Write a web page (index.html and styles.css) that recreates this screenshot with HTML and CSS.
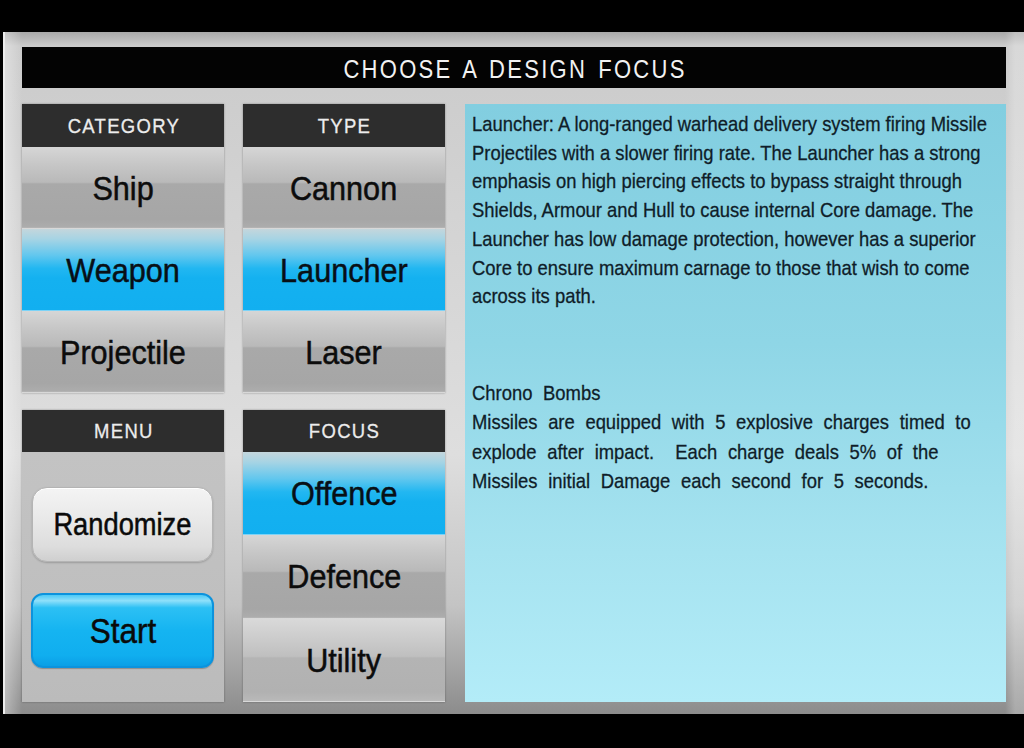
FILE: index.html
```html
<!DOCTYPE html>
<html lang="en">
<head>
<meta charset="utf-8">
<title>Choose a Design Focus</title>
<link rel="stylesheet" href="styles.css">
</head>
<body>
<div class="screen">
  <div class="frame">
    <div class="title"><span class="sq title-text">CHOOSE A DESIGN FOCUS</span></div>
    <div class="grid">
      <section class="panel cat">
        <div class="hdr"><span class="sq">CATEGORY</span></div>
        <div class="opt"><span class="sq">Ship</span></div>
        <div class="opt sel"><span class="sq">Weapon</span></div>
        <div class="opt"><span class="sq">Projectile</span></div>
      </section>
      <section class="panel type">
        <div class="hdr"><span class="sq">TYPE</span></div>
        <div class="opt"><span class="sq">Cannon</span></div>
        <div class="opt sel"><span class="sq">Launcher</span></div>
        <div class="opt"><span class="sq">Laser</span></div>
      </section>
      <section class="desc">
        <p class="desc-text">Launcher: A long-ranged warhead delivery system firing Missile<br>Projectiles with a slower firing rate. The Launcher has a strong<br>emphasis on high piercing effects to bypass straight through<br>Shields, Armour and Hull to cause internal Core damage. The<br>Launcher has low damage protection, however has a superior<br>Core to ensure maximum carnage to those that wish to come<br>across its path.</p>
        <p class="desc-text effect">Chrono Bombs<br>Missiles are equipped with 5 explosive charges timed to<br>explode after impact.&nbsp; Each charge deals 5% of the<br>Missiles initial Damage each second for 5 seconds.</p>
      </section>
      <section class="panel menu">
        <div class="hdr hdr-b"><span class="sq">MENU</span></div>
        <div class="menu-body">
          <button class="btn rand"><span class="sq">Randomize</span></button>
          <button class="btn start"><span class="sq">Start</span></button>
        </div>
      </section>
      <section class="panel focus">
        <div class="hdr hdr-b"><span class="sq">FOCUS</span></div>
        <div class="opt sel"><span class="sq">Offence</span></div>
        <div class="opt"><span class="sq">Defence</span></div>
        <div class="opt light"><span class="sq">Utility</span></div>
      </section>
    </div>
  </div>
</div>
</body>
</html>
```
FILE: styles.css
```css
* { box-sizing: border-box; }
html, body {
  margin: 0;
  padding: 0;
  background: #000;
}
body {
  font-family: "Liberation Sans", Arial, sans-serif;
  width: 1024px;
  height: 748px;
  overflow: hidden;
}
.screen {
  height: 748px;
  padding: 32px 0 34px 0;
}
.frame {
  margin-left: 3px;
  height: 682px;
  padding: 15px 18px 12px 17px;
  border-left: 2px solid #ececec;
  background:
    linear-gradient(90deg, rgba(255,255,255,0.35) 0px, rgba(255,255,255,0) 17px, rgba(255,255,255,0) 1000px, rgba(255,255,255,0.25) 1010px),
    linear-gradient(180deg, #a9a9a9 0px, #cbcbcb 14px, #d4d4d4 30%, #dedede 62%, #c4c4c4 84%, #8c8c8c 100%);
  display: flex;
  flex-direction: column;
}
.sq {
  display: inline-block;
  transform: scaleX(0.88);
  white-space: nowrap;
}
.title {
  height: 41px;
  margin-bottom: 16px;
  background: #030303;
  color: #f2f2f2;
  display: flex;
  align-items: center;
  justify-content: center;
  padding-top: 3px;
  font-size: 25px;
}
.title-text {
  letter-spacing: 2.6px;
  word-spacing: 3px;
  margin-left: 2px;
}
.grid {
  display: grid;
  grid-template-columns: 202px 202px 542px;
  grid-template-rows: 289px 292px;
  column-gap: 19px;
  row-gap: 17px;
}
.panel {
  display: flex;
  flex-direction: column;
  box-shadow: 0 0 2px rgba(0,0,0,0.35);
}
.hdr {
  height: 43px;
  flex: 0 0 auto;
  background: #2d2d2d;
  color: #ececec;
  font-size: 21px;
  letter-spacing: 1.5px;
  display: flex;
  align-items: center;
  justify-content: center;
  padding-left: 1px;
  -webkit-text-stroke: 0.3px #ececec;
}
.hdr-b { height: 42px; }
.opt {
  flex: 1 1 0;
  display: flex;
  align-items: center;
  justify-content: center;
  font-size: 34px;
  color: #0c0c0c;
  -webkit-text-stroke: 0.5px #0c0c0c;
  background: linear-gradient(180deg, #d6d6d6 0%, #c6c6c6 22%, #b9b9b9 43%, #a9a9a9 45%, #a6a6a6 88%, #acacac 97%, #bdbdbd 100%);
  box-shadow: inset 0 -1px 0 rgba(255,255,255,0.45);
}
.opt .sq { transform: scaleX(0.9); }
.opt.light {
  background: linear-gradient(180deg, #d9d9d9 0%, #cbcbcb 25%, #bfbfbf 45%, #b4b4b4 47%, #b1b1b1 88%, #bababa 100%);
}
.opt.sel {
  background: linear-gradient(180deg, #c4d6dc 0%, #a7d4e4 12%, #62c7ee 32%, #22b7f1 48%, #14b1f0 60%, #12aff0 100%);
  color: #071018;
}
.desc {
  grid-column: 3;
  grid-row: 1 / span 2;
  margin-left: 1px;
  background: linear-gradient(180deg, #82cee0 0%, #8fd6e6 40%, #a6e3f0 75%, #b3ecf8 100%);
  padding: 6px 0 0 7px;
  overflow: hidden;
  color: #0f1d29;
}
.desc-text {
  margin: 0;
  width: 610px;
  font-size: 21px;
  line-height: 28.7px;
  white-space: nowrap;
  transform: scaleX(0.877);
  transform-origin: left top;
  -webkit-text-stroke: 0.3px #0f1d29;
}
.desc-text.effect {
  margin-top: 67px;
  line-height: 29.4px;
  word-spacing: 6.3px;
}
.menu-body {
  flex: 1 1 auto;
  background: linear-gradient(180deg, #c3c3c3 0%, #bfbfbf 60%, #bbbbbb 100%);
  display: flex;
  flex-direction: column;
  padding: 35px 10px 0 10px;
  gap: 31px;
}
.btn {
  font-family: "Liberation Sans", Arial, sans-serif;
  height: 75px;
  padding: 0;
  color: #0a0a0a;
  -webkit-text-stroke: 0.5px #0a0a0a;
  cursor: pointer;
}
.rand {
  margin: 0 1px 0 0;
  font-size: 31px;
  border: 1px solid #b4b4b4;
  border-radius: 15px;
  background: linear-gradient(180deg, #f4f4f4 0%, #e8e8e8 45%, #dddddd 80%, #cfcfcf 100%);
  box-shadow: 0 1px 2px rgba(0,0,0,0.2), inset 0 1px 0 #ffffff;
}
.start {
  margin: 0 0 0 -1px;
  font-size: 35px;
  border: 2px solid #0c93dd;
  border-radius: 12px;
  background: linear-gradient(180deg, #4cc9f6 0%, #8fe0fa 8%, #2cc0f4 18%, #15b4f1 50%, #10aeef 85%, #0a9fe6 100%);
  box-shadow: 0 1px 1px rgba(0,0,0,0.25);
}
.start .sq { transform: scaleX(0.9); }
```
